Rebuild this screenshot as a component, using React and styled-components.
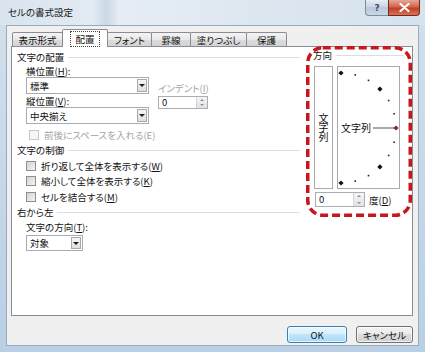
import React from 'react';
import styled, { createGlobalStyle } from 'styled-components';

const FONT = `"Noto Sans CJK JP", "Noto Sans", sans-serif`;

const GlobalStyle = createGlobalStyle`
  html, body { margin: 0; padding: 0; background: #fff; }
  body { font-family: ${FONT}; font-size: 9.5px; color: #111; font-feature-settings: "palt"; }
  * { box-sizing: border-box; }
`;

const Window = styled.div`
  width: 425px;
  height: 352px;
  display: flex;
  flex-direction: column;
  overflow: hidden;
  background: linear-gradient(#d3e0ec, #b9cfe5);
`;

const TitleBar = styled.div`
  height: 25px;
  flex: none;
  display: flex;
  justify-content: space-between;
  align-items: flex-start;
  padding: 0 5px 0 8px;
  background: linear-gradient(to right, #d9e4ef 0%, #e2eaf2 22%, #c9d7e6 25%, #e6edf4 28%, #dde7f0 60%, #d6e2ee 100%);
`;

const Title = styled.div`
  line-height: 24px;
  font-size: 9.5px;
  color: #1a1a1a;
`;

const TitleButtons = styled.div`
  display: flex;
`;

const HelpButton = styled.div`
  width: 23px;
  height: 16px;
  border: 1px solid #7c8b9d;
  border-top: none;
  border-right: none;
  border-radius: 0 0 0 4px;
  background: linear-gradient(#e6edf4, #c6d4e3 50%, #b9c9da 50%, #cbd8e5);
  display: flex;
  align-items: center;
  justify-content: center;
  color: #3b4b60;
  font-family: "DejaVu Sans", sans-serif;
  font-size: 9px;
  font-weight: bold;
`;

const CloseButton = styled.div`
  width: 32px;
  height: 16px;
  border: 1px solid #6e2b1e;
  border-top: none;
  border-radius: 0 0 4px 0;
  background: linear-gradient(#e7a898, #d4654d 45%, #c43d27 55%, #d97357);
  display: flex;
  align-items: center;
  justify-content: center;
`;

const Body = styled.div`
  flex: 1;
  margin: 0 6px 6px 6px;
  border: 1px solid #9aaabb;
  background: #f0f0f0;
  padding: 3px 5px 2px 4px;
  display: flex;
  flex-direction: column;
`;

const TabRow = styled.div`
  height: 18px;
  display: flex;
  align-items: flex-end;
  padding-left: 1px;
  margin-bottom: -1px;
  position: relative;
  z-index: 1;
`;

const Tab = styled.div`
  width: ${p => p.$w}px;
  height: ${p => (p.$active ? 18 : 14)}px;
  margin-bottom: ${p => (p.$active ? 0 : 1)}px;
  margin-left: -1px;
  &:first-child { margin-left: 0; }
  border: 1px solid #898c95;
  border-bottom: none;
  border-radius: 2px 2px 0 0;
  background: ${p => (p.$active ? '#fff' : 'linear-gradient(#f4f4f4, #e8e8e8 50%, #dcdcdc 50%, #d4d4d4)')};
  display: flex;
  align-items: center;
  justify-content: center;
  line-height: 12px;
  position: relative;
  z-index: ${p => (p.$active ? 2 : 1)};
`;

const FocusText = styled.span`
  outline: 1px dotted #444;
  padding: 1px 4px;
`;

const Panel = styled.div`
  height: 270px;
  flex: none;
  border: 1px solid #898c95;
  background: #fff;
  position: relative;
  display: flex;
  padding-left: 5px;
`;

const LeftColumn = styled.div`
  width: 290px;
  padding-top: 4px;
  display: flex;
  flex-direction: column;
  align-items: flex-start;
`;

const RightColumn = styled.div`
  flex: 1;
  padding: 2px 0 0 6px;
  display: flex;
  flex-direction: column;
`;

const Header = styled.div`
  display: flex;
  align-items: center;
  align-self: stretch;
  height: 13px;
  line-height: 13px;
  margin-top: ${p => p.$mt || 0}px;
  margin-right: ${p => p.$mr ?? 7}px;
  &::after {
    content: '';
    flex: 1;
    height: 1px;
    background: #d5dfe5;
    margin-left: 4px;
  }
`;

const AlignGrid = styled.div`
  display: grid;
  grid-template-columns: 123px 50px;
  grid-template-rows: 13px 17px 13px 17px;
  column-gap: 9px;
  padding-left: 9px;
`;

const FieldLabel = styled.div`
  line-height: 12px;
  white-space: nowrap;
  align-self: ${p => (p.$row ? 'end' : 'flex-start')};
  grid-column: ${p => p.$col || 1};
  grid-row: ${p => p.$row || 'auto'};
  color: ${p => (p.$disabled ? '#a3a3a3' : 'inherit')};
  padding-left: ${p => p.$pl || 0}px;
  margin-top: ${p => p.$mt || 0}px;
`;

const Combo = styled.div`
  width: ${p => p.$w}px;
  height: ${p => p.$h || 17}px;
  border: 1px solid #a6acb4;
  background: #fff;
  display: flex;
  align-items: center;
  grid-column: 1;
  grid-row: ${p => p.$row || 'auto'};
  margin-left: ${p => p.$ml || 0}px;
  margin-top: ${p => p.$mt || 0}px;
`;

const ComboText = styled.span`
  flex: 1;
  padding-left: 3px;
  line-height: 12px;
`;

const DropButton = styled.span`
  width: 10px;
  align-self: stretch;
  margin: 1px;
  border: 1px solid #a9a9a9;
  background: linear-gradient(#f6f6f6, #dedede);
  display: flex;
  align-items: center;
  justify-content: center;
  &::after {
    content: '';
    border-left: 3px solid transparent;
    border-right: 3px solid transparent;
    border-top: 3px solid #1d1d1d;
  }
`;

const Spin = styled.div`
  width: ${p => p.$w}px;
  height: ${p => p.$h}px;
  border: 1px solid #abadb3;
  background: #fff;
  display: flex;
  grid-column: ${p => p.$col || 'auto'};
  grid-row: ${p => p.$row || 'auto'};
  margin-top: ${p => p.$mt || 0}px;
`;

const SpinValue = styled.span`
  flex: 1;
  padding-left: 3px;
  line-height: ${p => p.$lh}px;
`;

const SpinButtons = styled.span`
  width: 11px;
  display: flex;
  flex-direction: column;
  border-left: 1px solid #d4d4d4;
  background: linear-gradient(#f5f5f5, #e2e2e2);
`;

const SpinHalf = styled.span`
  flex: 1;
  display: flex;
  align-items: center;
  justify-content: center;
  &::after {
    content: '';
    border-left: 2.5px solid transparent;
    border-right: 2.5px solid transparent;
    ${p => (p.$down ? 'border-top' : 'border-bottom')}: 2.5px solid #7e95ad;
  }
`;

const CheckRow = styled.div`
  display: flex;
  align-items: center;
  height: ${p => p.$h || 15.5}px;
  padding-left: ${p => p.$pl || 9}px;
  margin-top: ${p => p.$mt || 0}px;
  color: ${p => (p.$disabled ? '#a3a3a3' : 'inherit')};
`;

const Check = styled.span`
  width: 10px;
  height: 10px;
  flex: none;
  margin-right: 5px;
  border: 1px solid ${p => (p.$disabled ? '#c8c8c8' : '#8e8f8f')};
  background: ${p => (p.$disabled ? '#f6f6f6' : 'linear-gradient(135deg, #d2d2d2, #f4f4f4)')};
`;

const DirectionRow = styled.div`
  display: flex;
  gap: 4px;
  margin: 4px 0 0 1px;
`;

const VerticalBox = styled.div`
  width: 19px;
  height: 123px;
  border: 1px solid #a9a9a9;
  background: #fff;
  display: flex;
  align-items: center;
  justify-content: center;
  writing-mode: vertical-rl;
  text-orientation: upright;
  font-size: 10px;
  letter-spacing: -0.5px;
`;

const DialBox = styled.div`
  width: 63px;
  height: 123px;
  border: 1px solid #a9a9a9;
  background: #fff;
`;

const DegreeRow = styled.div`
  display: flex;
  align-items: center;
  margin: 3px 0 0 2px;
  gap: 4px;
`;

const Annotation = styled.svg`
  position: absolute;
  left: 294px;
  top: -1px;
  pointer-events: none;
`;

const ButtonRow = styled.div`
  display: flex;
  justify-content: flex-end;
  gap: 9px;
  margin-top: 10px;
`;

const Button = styled.button`
  width: ${p => p.$w}px;
  height: 17px;
  padding: 0;
  font-family: ${FONT};
  font-size: 9.5px;
  font-feature-settings: "palt";
  color: #111;
  border-radius: 3px;
  border: 1px solid ${p => (p.$primary ? '#3c7fb1' : '#707070')};
  background: ${p =>
    p.$primary
      ? 'linear-gradient(#eaf6fd, #d9f0fc 50%, #bee6fd 50%, #a7d9f5)'
      : 'linear-gradient(#f2f2f2, #ebebeb 50%, #dddddd 50%, #cfcfcf)'};
  box-shadow: inset 0 0 0 1px rgba(255, 255, 255, 0.7);
`;

const Dial = () => {
  const cx = 3;
  const cy = 61;
  const r = 55;
  const marks = [];
  for (let a = 90; a >= -90; a -= 15) {
    const rad = (a * Math.PI) / 180;
    const x = cx + r * Math.cos(rad);
    const y = cy - r * Math.sin(rad);
    if (a === 0) continue;
    if (a % 45 === 0) {
      marks.push(
        <polygon key={a} points={`${x},${y - 2.6} ${x + 2.6},${y} ${x},${y + 2.6} ${x - 2.6},${y}`} fill="#111" />
      );
    } else {
      marks.push(<rect key={a} x={x - 0.8} y={y - 0.8} width={1.6} height={1.6} fill="#222" />);
    }
  }
  const rx = cx + r;
  return (
    <svg width="61" height="121" viewBox="0 0 61 121">
      {marks}
      <text x="3" y={cy + 3.5} fontSize="10" fontFamily={FONT} fill="#111">文字列</text>
      <line x1="35" y1={cy} x2={rx - 2} y2={cy} stroke="#8c8c8c" strokeWidth="1.5" />
      <polygon points={`${rx},${cy - 2.6} ${rx + 2.6},${cy} ${rx},${cy + 2.6} ${rx - 2.6},${cy}`} fill="#8e1f2b" />
    </svg>
  );
};

const SpinControl = ({ w, h, ...rest }) => (
  <Spin $w={w} $h={h} {...rest}>
    <SpinValue $lh={h - 2}>0</SpinValue>
    <SpinButtons>
      <SpinHalf />
      <SpinHalf $down />
    </SpinButtons>
  </Spin>
);

export default function App() {
  return (
    <>
      <GlobalStyle />
      <Window>
        <TitleBar>
          <Title>セルの書式設定</Title>
          <TitleButtons>
            <HelpButton>?</HelpButton>
            <CloseButton>
              <svg width="11" height="9" viewBox="0 0 11 9">
                <path d="M1.5 1 L9.5 8 M9.5 1 L1.5 8" stroke="#fff" strokeWidth="2.2" strokeLinecap="round" />
              </svg>
            </CloseButton>
          </TitleButtons>
        </TitleBar>
        <Body>
          <TabRow>
            <Tab $w={51}>表示形式</Tab>
            <Tab $w={46} $active><FocusText>配置</FocusText></Tab>
            <Tab $w={45}>フォント</Tab>
            <Tab $w={40}>罫線</Tab>
            <Tab $w={57}>塗りつぶし</Tab>
            <Tab $w={41}>保護</Tab>
          </TabRow>
          <Panel>
            <LeftColumn>
              <Header>文字の配置</Header>
              <AlignGrid>
                <FieldLabel $row={1}>横位置(<u>H</u>):</FieldLabel>
                <Combo $w={123} $row={2}>
                  <ComboText>標準</ComboText>
                  <DropButton />
                </Combo>
                <FieldLabel $row={2} $col={2} $disabled>インデント(<u>I</u>)</FieldLabel>
                <FieldLabel $row={3}>縦位置(<u>V</u>):</FieldLabel>
                <SpinControl w={50} h={13} $row={3} $col={2} $mt={2} />
                <Combo $w={123} $row={4}>
                  <ComboText>中央揃え</ComboText>
                  <DropButton />
                </Combo>
              </AlignGrid>
              <CheckRow $disabled $h={13} $mt={4} $pl={12}>
                <Check $disabled />
                前後にスペースを入れる(E)
              </CheckRow>
              <Header $mt={3}>文字の制御</Header>
              <CheckRow $mt={1}>
                <Check />
                折り返して全体を表示する(<u>W</u>)
              </CheckRow>
              <CheckRow>
                <Check />
                縮小して全体を表示する(<u>K</u>)
              </CheckRow>
              <CheckRow>
                <Check />
                セルを結合する(<u>M</u>)
              </CheckRow>
              <Header $mt={1}>右から左</Header>
              <FieldLabel $pl={9} $mt={2.5}>文字の方向(<u>T</u>):</FieldLabel>
              <Combo $w={57} $h={16} $ml={9} $mt={2}>
                <ComboText>対象</ComboText>
                <DropButton />
              </Combo>
            </LeftColumn>
            <RightColumn>
              <Header $mr={8}>方向</Header>
              <DirectionRow>
                <VerticalBox>文字列</VerticalBox>
                <DialBox>
                  <Dial />
                </DialBox>
              </DirectionRow>
              <DegreeRow>
                <SpinControl w={50} h={15} />
                <span>度(<u>D</u>)</span>
              </DegreeRow>
            </RightColumn>
            <Annotation width="106" height="171" viewBox="0 0 106 171">
              <rect
                x="1.75"
                y="1.75"
                width="102.5"
                height="167.5"
                rx="15"
                fill="none"
                stroke="#c8161d"
                strokeWidth="3.5"
                strokeDasharray="8 4"
              />
            </Annotation>
          </Panel>
          <ButtonRow>
            <Button $w={60} $primary>OK</Button>
            <Button $w={57}>キャンセル</Button>
          </ButtonRow>
        </Body>
      </Window>
    </>
  );
}
